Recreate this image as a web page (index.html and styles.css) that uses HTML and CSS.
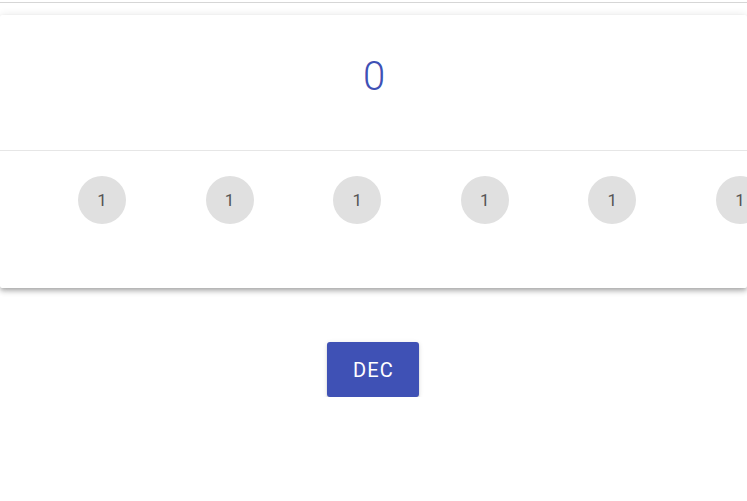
FILE: index.html
```html
<!DOCTYPE html>
<html>
<head>
<meta charset="utf-8">
<link rel="stylesheet" href="styles.css">
</head>
<body>
<div class="topbar"></div>
<div class="card">
  <div class="card-head">
    <span class="count">0</span>
  </div>
  <div class="chips">
    <span class="chip">1</span>
    <span class="chip">1</span>
    <span class="chip">1</span>
    <span class="chip">1</span>
    <span class="chip">1</span>
    <span class="chip">1</span>
  </div>
</div>
<div class="actions">
  <button class="btn">DEC</button>
</div>
</body>
</html>
```

FILE: styles.css
```css
html, body {
  margin: 0;
  padding: 0;
  background: #fff;
  overflow: hidden;
  font-family: Roboto, "Liberation Sans", sans-serif;
}
.topbar {
  height: 2px;
  border-bottom: 1px solid #d6d6d6;
  margin-bottom: 12px;
}
.card {
  background: #fff;
  box-shadow: 0 2px 4px -1px rgba(0,0,0,.2), 0 4px 5px 0 rgba(0,0,0,.14), 0 1px 10px 0 rgba(0,0,0,.12);
  border-radius: 2px;
}
.card-head {
  height: 123px;
  padding-bottom: 12px;
  display: flex;
  align-items: center;
  justify-content: center;
  border-bottom: 1px solid #e6e6e6;
}
.count {
  color: #3f51b5;
  font-size: 40px;
  font-weight: 300;
  padding-left: 1px;
}
.chips {
  display: flex;
  gap: 79.6px;
  padding: 25px 0 64px 78px;
  white-space: nowrap;
  overflow: hidden;
}
.chip {
  flex: 0 0 48px;
  width: 48px;
  height: 48px;
  border-radius: 50%;
  background: #e0e0e0;
  color: #555;
  font-size: 17px;
  display: flex;
  align-items: center;
  justify-content: center;
}
.actions {
  display: flex;
  justify-content: center;
  padding-top: 54px;
}
.btn {
  width: 92px;
  height: 55px;
  margin-right: 1px;
  border: none;
  border-radius: 3px;
  background: #3f51b5;
  color: #fff;
  font-family: Roboto, "Liberation Sans", sans-serif;
  font-size: 20px;
  letter-spacing: 1.2px;
  padding: 0 0 0 1px;
  box-shadow: 0 3px 1px -2px rgba(0,0,0,.2), 0 2px 2px 0 rgba(0,0,0,.14), 0 1px 5px 0 rgba(0,0,0,.12);
}
```
